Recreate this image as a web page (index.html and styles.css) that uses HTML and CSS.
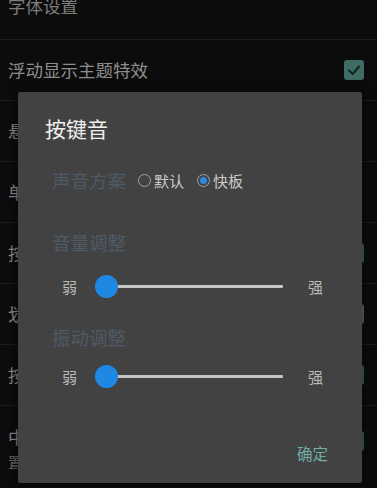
FILE: index.html
```html
<!DOCTYPE html>
<html lang="zh-CN">
<head>
<meta charset="utf-8">
<title>按键音</title>
<link rel="stylesheet" href="styles.css">
</head>
<body>
<div class="screen">
  <ul class="list">
    <li class="row first"><span class="row-title">字体设置</span></li>
    <li class="row"><span class="row-title">浮动显示主题特效</span>
      <span class="check on"><svg viewBox="0 0 20 20" width="20" height="20"><polyline points="5,10.5 8.8,14 15,6.5" fill="none" stroke="#172523" stroke-width="2.2" stroke-linecap="round" stroke-linejoin="round"/></svg></span></li>
    <li class="row"><span class="row-title">悬浮窗口设置</span></li>
    <li class="row"><span class="row-title">单手模式</span></li>
    <li class="row"><span class="row-title">按键音</span><span class="check on"></span></li>
    <li class="row"><span class="row-title">划词翻译</span><span class="check off"></span></li>
    <li class="row"><span class="row-title">按键振动</span><span class="check on"></span></li>
    <li class="row tall">
      <div class="row-text"><span class="row-title">中英文切换</span><span class="row-sub">置顶显示</span></div>
      <span class="check on"></span>
    </li>
  </ul>

  <div class="dialog">
    <div class="d-title">按键音</div>
    <div class="d-scheme">
      <span class="d-label">声音方案</span>
      <span class="radio"><span class="dot"></span>默认</span>
      <span class="radio sel"><span class="dot"></span>快板</span>
    </div>
    <div class="d-label-row vol"><span class="d-label">音量调整</span></div>
    <div class="slider-row s1">
      <span class="end">弱</span>
      <div class="slider"><div class="track"></div><div class="thumb"></div></div>
      <span class="end strong">强</span>
    </div>
    <div class="d-label-row vib"><span class="d-label">振动调整</span></div>
    <div class="slider-row s2">
      <span class="end">弱</span>
      <div class="slider"><div class="track"></div><div class="thumb"></div></div>
      <span class="end strong">强</span>
    </div>
    <div class="d-actions"><span class="ok">确定</span></div>
  </div>
</div>
</body>
</html>
```

FILE: styles.css
```css
* { box-sizing: border-box; }
html, body {
  margin: 0;
  padding: 0;
  background: #0c0c0c;
  font-family: "Noto Sans CJK SC", "Noto Sans", sans-serif;
}
.screen {
  position: relative;
  width: 377px;
  height: 488px;
  overflow: hidden;
  background: #0c0c0c;
}
.list {
  list-style: none;
  margin: -21px 0 0 0;
  padding: 0;
}
.row {
  height: 61px;
  border-bottom: 1px solid #1d1d1d;
  display: flex;
  align-items: center;
  justify-content: space-between;
  padding: 0 13px 0 8px;
}
.row.first { padding-bottom: 7px; }
.row.first .row-title { color: #7c7c7c; }
.row.tall {
  height: 90px;
  border-bottom: none;
  align-items: flex-start;
  padding-top: 19px;
}
.row-text { display: flex; flex-direction: column; }
.row-title {
  font-size: 17.5px;
  line-height: 24px;
  color: #8e8e8e;
}
.row-sub {
  font-size: 15px;
  line-height: 26px;
  color: #6c6c6c;
}
.check {
  width: 20px;
  height: 20px;
  border-radius: 3px;
  display: block;
}
.row.tall .check { margin-top: 6px; }
.check.on { background: #3e6d66; }
.check.off { background: #6a6a6a; }
.check svg { display: block; }

.dialog {
  position: absolute;
  left: 18px;
  top: 92px;
  width: 344px;
  height: 391px;
  background: #424242;
  border-radius: 2px;
  box-shadow: 0 0 14px rgba(0,0,0,0.7);
}
.d-title {
  height: 72px;
  display: flex;
  align-items: center;
  padding-left: 27px;
  font-size: 21px;
  color: #efefef;
}
.d-scheme {
  height: 32px;
  display: flex;
  align-items: center;
  padding-left: 34px;
}
.d-label {
  font-size: 18.5px;
  color: #4f5a67;
  letter-spacing: 0;
}
.radio {
  display: flex;
  align-items: center;
  font-size: 15px;
  color: #cccccc;
}
.d-scheme .d-label { margin-right: 12px; }
.radio + .radio { margin-left: 13px; }
.dot {
  width: 13px;
  height: 13px;
  border: 1.5px solid #a2a2a2;
  border-radius: 50%;
  margin-right: 3px;
  display: flex;
  align-items: center;
  justify-content: center;
}
.radio.sel .dot::after {
  content: "";
  width: 7px;
  height: 7px;
  border-radius: 50%;
  background: #2a8ae3;
}
.d-label-row {
  height: 32px;
  display: flex;
  align-items: center;
  padding-left: 34px;
}
.d-label-row.vol { margin-top: 30px; }
.d-label-row.vib { margin-top: 19px; }
.slider-row {
  height: 32px;
  display: flex;
  align-items: center;
  padding-left: 44px;
}
.slider-row.s1 { margin-top: 12px; }
.slider-row.s2 { margin-top: 7px; }
.end {
  font-size: 15px;
  color: #b8b8b8;
  width: 15px;
}
.slider {
  position: relative;
  margin-left: 18px;
  width: 188px;
  height: 24px;
}
.track {
  position: absolute;
  left: 11px;
  right: 0;
  top: 10.5px;
  height: 3px;
  background: #c6c6c6;
  border-radius: 1px;
}
.thumb {
  position: absolute;
  left: 0;
  top: 0.5px;
  width: 23px;
  height: 23px;
  border-radius: 50%;
  background: #1f88e3;
}
.end.strong { margin-left: 25px; }
.d-actions {
  margin-top: 45px;
  height: 32px;
  display: flex;
  align-items: center;
  justify-content: flex-end;
  padding-right: 34px;
}
.ok {
  font-size: 15.5px;
  color: #72ada2;
}
```
